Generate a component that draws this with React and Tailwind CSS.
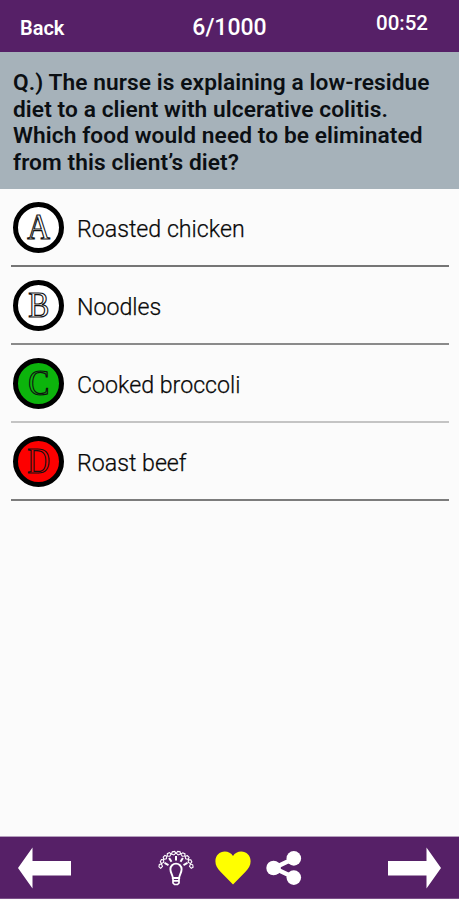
const question =
  "Q.) The nurse is explaining a low-residue diet to a client with ulcerative colitis. Which food would need to be eliminated from this client’s diet?";

const options = [
  { letter: "A", text: "Roasted chicken", style: "bg-white", line: "border-[#757575]" },
  { letter: "B", text: "Noodles", style: "bg-white", line: "border-[#8a8a8a]" },
  { letter: "C", text: "Cooked broccoli", style: "bg-[#0cb40c]", line: "border-[#c4c4c4]" },
  { letter: "D", text: "Roast beef", style: "bg-[#fd0000]", line: "border-[#7c7c7c]" },
];

function Arrow({ className }) {
  return (
    <svg viewBox="0 0 54 42" fill="white" className={className}>
      <path d="M0 21L14.5 0.5V14H53V28.5H14.5V41.5Z" />
    </svg>
  );
}

function BulbIcon() {
  const rays = [-62, -32, 0, 32, 62];
  const segments = [-81, -63, -45, -27, -9, 9, 27, 45, 63, 81];
  return (
    <svg viewBox="0 0 36 36" fill="none" stroke="white" className="w-9 h-9">
      {segments.map((angle) => (
        <path
          key={angle}
          d="M15.8 3.4L17 1.4H19.4L20.2 3.4L18 4.8Z"
          strokeWidth="1.1"
          transform={`rotate(${angle} 18 18.5)`}
        />
      ))}
      {rays.map((angle) => (
        <path
          key={angle}
          d="M18 6V10.5"
          strokeWidth="2"
          transform={`rotate(${angle} 18 19)`}
        />
      ))}
      <path
        d="M14.8 28C14.8 25 12.4 23 12.4 19.2A5.6 5.6 0 0 1 23.6 19.2C23.6 23 21.2 25 21.2 28Z"
        strokeWidth="1.9"
      />
      <path d="M15 28V33L16.5 34.5H19.5L21 33V28M15 30.8H21" strokeWidth="1.7" />
    </svg>
  );
}

function HeartIcon() {
  return (
    <svg viewBox="0 0 36 34" fill="#ffff00" className="w-9 h-[34px]">
      <path d="M18 33.5L5.5 20.8C2.3 17.4.4 14.4.4 10.2C.4 4.6 4.6.6 9.8.6C13.2.6 16.3 2.2 18 5C19.7 2.2 22.8.6 26.2.6C31.4.6 35.6 4.6 35.6 10.2C35.6 14.4 33.7 17.4 30.5 20.8Z" />
    </svg>
  );
}

function ShareIcon() {
  return (
    <svg viewBox="0 0 36 34" fill="white" className="w-9 h-[34px]">
      <path d="M28 7.5L8 17L28 26.5" fill="none" stroke="white" strokeWidth="4.4" />
      <circle cx="27.8" cy="7.4" r="7.3" />
      <circle cx="7.6" cy="17" r="7.3" />
      <circle cx="27.8" cy="26.6" r="7.3" />
    </svg>
  );
}

export default function App() {
  return (
    <div className="w-full h-screen flex flex-col bg-[#fbfbfb] font-['Roboto',sans-serif]">
      <header className="h-[52px] shrink-0 bg-[#562067] text-white grid grid-cols-3 px-5">
        <div className="pt-3.5 text-[20px] leading-7 font-semibold">Back</div>
        <div className="pt-3.5 text-[23px] leading-7 font-medium text-center">6/1000</div>
        <div className="pt-[9px] pr-[11px] text-[20.5px] leading-7 font-medium text-right">00:52</div>
      </header>

      <div className="h-[137px] shrink-0 bg-[#a6b2ba] pl-[13px] pr-4 pt-[18px]">
        <p className="text-[22.7px] leading-[26.7px] font-semibold text-[#0b0f13] tracking-[0.09px]">
          {question}
        </p>
      </div>

      <ul className="flex-1 pl-[11px] pr-2.5">
        {options.map((option) => (
          <li
            key={option.letter}
            className={`h-[78px] border-b-2 flex items-center pl-0.5 gap-[13px] ${option.line}`}
          >
            <div
              className={`size-[51px] mt-px rounded-full border-[5px] border-black flex items-center justify-center ${option.style}`}
            >
              <span className="font-['Liberation_Serif',serif] text-[35px] leading-none text-transparent [-webkit-text-stroke:1.2px_#111] scale-x-90">
                {option.letter}
              </span>
            </div>
            <span className="pt-1 text-[23.2px] leading-8 font-light text-[#080808] [-webkit-text-stroke:0.25px_#080808]">
              {option.text}
            </span>
          </li>
        ))}
      </ul>

      <footer className="h-[63px] mb-px shrink-0 bg-[#562067] border-y border-t-[#b59fbd] border-b-[#7a4f88] flex items-center px-[18px]">
        <Arrow className="w-[54px] h-[42px]" />
        <div className="flex-1 flex items-center pl-[86px]">
          <BulbIcon />
          <div className="ml-[21px]">
            <HeartIcon />
          </div>
          <div className="ml-[15px]">
            <ShareIcon />
          </div>
        </div>
        <Arrow className="w-[54px] h-[42px] -scale-x-100" />
      </footer>
    </div>
  );
}
